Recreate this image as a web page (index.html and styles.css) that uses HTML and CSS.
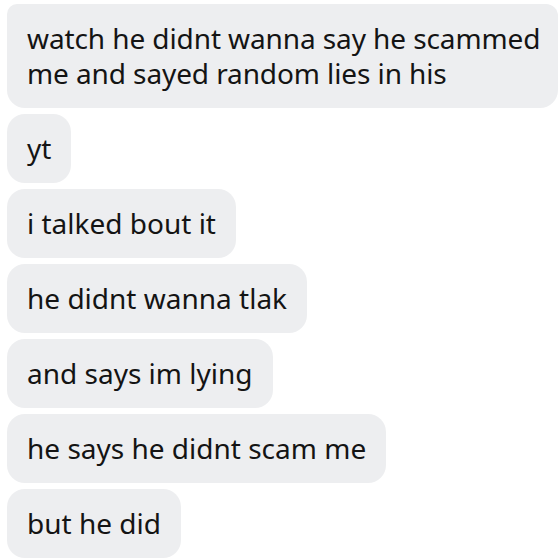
FILE: index.html
```html
<!DOCTYPE html>
<html>
<head>
<meta charset="utf-8">
<link rel="stylesheet" href="styles.css">
</head>
<body>
<div class="chat">
  <div class="bubble wide">watch he didnt wanna say he scammed<br>me and sayed random lies in his</div>
  <div class="bubble">yt</div>
  <div class="bubble">i talked bout it</div>
  <div class="bubble">he didnt wanna tlak</div>
  <div class="bubble">and says im lying</div>
  <div class="bubble">he says he didnt scam me</div>
  <div class="bubble">but he did</div>
</div>
</body>
</html>
```
FILE: styles.css
```css
html, body {
  margin: 0;
  padding: 0;
  background: #ffffff;
}
.chat {
  display: flex;
  flex-direction: column;
  align-items: flex-start;
  gap: 6px;
  padding: 4px 2px 0 7px;
  font-family: "Noto Sans", sans-serif;
  font-size: 28px;
  line-height: 35px;
  color: #141414;
}
.bubble {
  background: #edeef0;
  border-radius: 18px;
  padding: 17px 20px;
  max-width: 551px;
  box-sizing: border-box;
  white-space: nowrap;
}
.wide {
  width: 551px;
  border-top-left-radius: 10px;
  border-top-right-radius: 12px;
  letter-spacing: -0.1px;
}
```
